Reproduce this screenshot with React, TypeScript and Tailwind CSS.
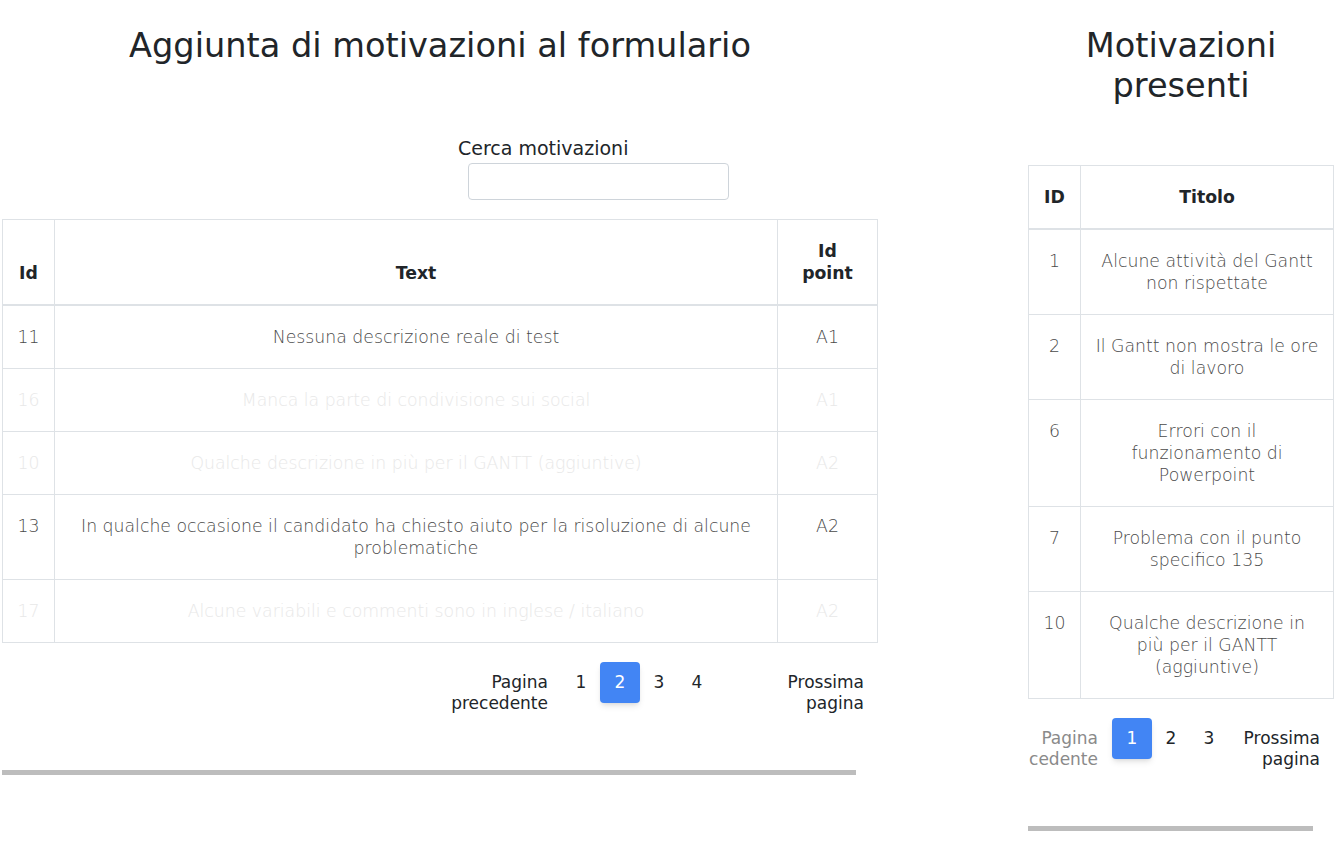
import React from "react";

const motivi = [
  { id: 11, text: "Nessuna descrizione reale di test", point: "A1", faded: false },
  { id: 16, text: "Manca la parte di condivisione sui social", point: "A1", faded: true },
  { id: 10, text: "Qualche descrizione in più per il GANTT (aggiuntive)", point: "A2", faded: true },
  {
    id: 13,
    text: "In qualche occasione il candidato ha chiesto aiuto per la risoluzione di alcune problematiche",
    point: "A2",
    faded: false,
  },
  { id: 17, text: "Alcune variabili e commenti sono in inglese / italiano", point: "A2", faded: true },
];

const presenti = [
  { id: 1, title: "Alcune attività del Gantt non rispettate" },
  { id: 2, title: "Il Gantt non mostra le ore di lavoro" },
  { id: 6, title: "Errori con il funzionamento di Powerpoint" },
  { id: 7, title: "Problema con il punto specifico 135" },
  { id: 10, title: "Qualche descrizione in più per il GANTT (aggiuntive)" },
];

function PageNum({ n, active }: { n: number; active?: boolean }) {
  return active ? (
    <span className="flex h-[41px] w-10 items-center justify-center rounded bg-[#4285f4] text-white shadow-md">
      {n}
    </span>
  ) : (
    <span className="flex h-[41px] w-[38px] items-center justify-center text-[#212529]">{n}</span>
  );
}

export default function App() {
  return (
    <div className="flex min-h-screen bg-white font-['DejaVu_Sans',sans-serif] text-[#212529]">
      {/* left: aggiunta */}
      <section className="ml-[2px] w-[876px]">
        <h1 className="pt-[24px] text-center text-[33.6px] leading-[44px]">
          Aggiunta di motivazioni al formulario
        </h1>
        <div className="mt-[69px] flex flex-col items-start">
          <label className="ml-[456px] text-[19px] leading-[22px]">Cerca motivazioni</label>
          <input className="ml-[466px] mt-[4px] h-[37px] w-[261px] rounded border border-[#ced4da]" />
        </div>
        <table className="mt-[19px] w-full border-collapse border border-[#dee2e6] text-[17.3px] leading-[22px]">
          <thead>
            <tr className="border-b-2 border-[#dee2e6]">
              <th className="w-[52px] border border-[#dee2e6] px-3 pb-[20px] pt-[20px] align-bottom font-bold">Id</th>
              <th className="border border-[#dee2e6] px-3 pb-[20px] align-bottom font-bold">Text</th>
              <th className="w-[100px] border border-[#dee2e6] px-3 pb-[20px] pt-[20px] align-bottom font-bold">
                Id
                <br />
                point
              </th>
            </tr>
          </thead>
          <tbody className="font-light">
            {motivi.map((m) => (
              <tr key={m.id} className={m.faded ? "text-[#e8e8e8]" : "text-[#4a4a4a]"}>
                <td className="border border-[#dee2e6] px-3 py-5 text-center align-top">{m.id}</td>
                <td className="border border-[#dee2e6] px-6 py-5 text-center align-top">{m.text}</td>
                <td className="border border-[#dee2e6] px-3 py-5 text-center align-top">{m.point}</td>
              </tr>
            ))}
          </tbody>
        </table>
        <div className="mt-[19px] flex items-start text-[17px] leading-[21px]">
          <span className="ml-[438px] mt-[10px] w-[108px] text-right">
            Pagina
            <br />
            precedente
          </span>
          <div className="ml-[14px] flex">
            <PageNum n={1} />
            <PageNum n={2} active />
            <PageNum n={3} />
            <PageNum n={4} />
          </div>
          <span className="ml-auto mr-[14px] mt-[10px] text-right">
            Prossima
            <br />
            pagina
          </span>
        </div>
        <div className="mt-[56px] h-[5px] w-[854px] bg-[#bdbdbd]" />
      </section>

      {/* right: presenti */}
      <section className="ml-[150px] w-[306px]">
        <h1 className="pt-[26px] text-center text-[33.6px] leading-[40px]">
          Motivazioni
          <br />
          presenti
        </h1>
        <table className="mt-[59px] w-full border-collapse border border-[#dee2e6] text-[17.3px] leading-[22px]">
          <thead>
            <tr className="border-b-2 border-[#dee2e6]">
              <th className="w-[52px] border border-[#dee2e6] px-2 py-5 align-bottom font-bold">ID</th>
              <th className="border border-[#dee2e6] px-3 py-5 align-bottom font-bold">Titolo</th>
            </tr>
          </thead>
          <tbody className="font-light text-[#4a4a4a]">
            {presenti.map((p) => (
              <tr key={p.id}>
                <td className="border border-[#dee2e6] px-2 py-5 text-center align-top">{p.id}</td>
                <td className="border border-[#dee2e6] px-[14px] py-5 text-center align-top">{p.title}</td>
              </tr>
            ))}
          </tbody>
        </table>
        <div className="mt-[19px] flex items-start text-[17px] leading-[21px]">
          <span className="mt-[10px] w-[70px] text-right text-[#8a8a8a]">
            Pagina
            <br />
            cedente
          </span>
          <div className="ml-[14px] flex">
            <PageNum n={1} active />
            <PageNum n={2} />
            <PageNum n={3} />
          </div>
          <span className="ml-auto mr-[14px] mt-[10px] text-right">
            Prossima
            <br />
            pagina
          </span>
        </div>
        <div className="mt-[56px] h-[5px] w-[285px] bg-[#bdbdbd]" />
      </section>
    </div>
  );
}
